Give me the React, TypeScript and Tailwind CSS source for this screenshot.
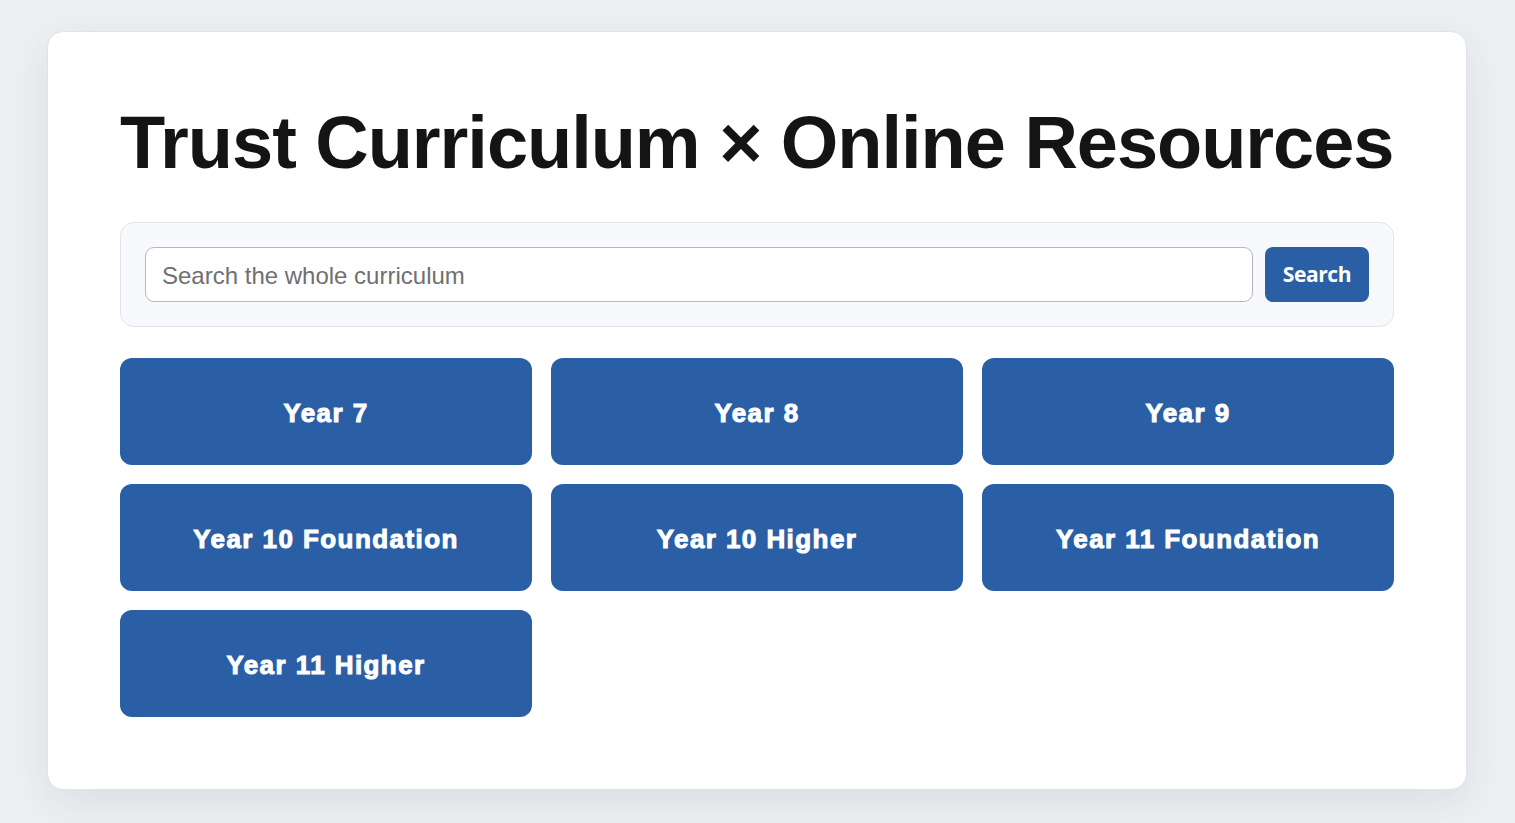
import React from "react";

const years: string[] = [
  "Year 7",
  "Year 8",
  "Year 9",
  "Year 10 Foundation",
  "Year 10 Higher",
  "Year 11 Foundation",
  "Year 11 Higher",
];

const App: React.FC = () => {
  return (
    <div className="min-h-screen bg-[#edf0f3] pt-[31px] pb-8 font-['Liberation_Sans',Arial,sans-serif]">
      <main className="ml-[47px] w-[1420px] rounded-2xl border border-[#dfe2e6] bg-white px-[72px] py-[72px] shadow-[0_12px_40px_rgba(30,40,60,0.09)]">
        {/* Title */}
        <h1 className="mb-10 whitespace-nowrap text-[74px] font-bold leading-[1.05] tracking-[-0.014em] text-[#141414]">
          Trust Curriculum × Online Resources
        </h1>

        {/* Search */}
        <form
          className="flex gap-3 rounded-[14px] border border-[#e1e4e9] bg-[#f7f9fc] p-6"
          onSubmit={(e) => e.preventDefault()}
        >
          <input
            type="text"
            placeholder="Search the whole curriculum"
            className="h-[55px] flex-1 rounded-[9px] border border-[#b9b9b9] bg-white px-4 pt-[3px] text-[24px] text-[#333] placeholder:text-[#707070] outline-none"
          />
          <button
            type="submit"
            className="h-[55px] w-[104px] rounded-[8px] bg-[#2a5fa6] pt-[2px] font-['Open_Sans',sans-serif] text-[21px] font-bold tracking-[-0.02em] text-white"
          >
            Search
          </button>
        </form>

        {/* Year grid */}
        <div className="mt-[31px] grid grid-cols-3 gap-[19px]">
          {years.map((year) => (
            <button
              key={year}
              className="flex h-[107px] items-center justify-center rounded-xl bg-[#2a5fa6] pt-[4px] text-[26px] font-bold tracking-[0.055em] text-white [-webkit-text-stroke:1px_#fff]"
            >
              {year}
            </button>
          ))}
        </div>
      </main>
    </div>
  );
};

export default App;
